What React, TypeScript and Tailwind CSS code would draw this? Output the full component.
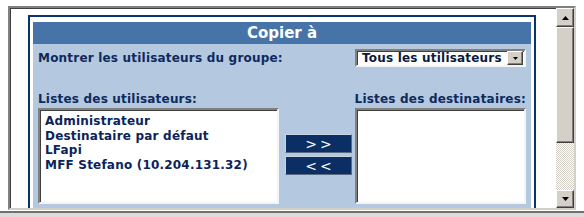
import React from 'react';

const USERS = [
  'Administrateur',
  'Destinataire par défaut',
  'LFapi',
  'MFF Stefano (10.204.131.32)',
];

function ArrowUp() {
  return (
    <svg width="7" height="4" viewBox="0 0 7 4">
      <path d="M3.5 0 L7 4 L0 4 Z" fill="#000" />
    </svg>
  );
}

function ArrowDown({ w = 7, h = 4 }: { w?: number; h?: number }) {
  return (
    <svg width={w} height={h} viewBox="0 0 7 4">
      <path d="M0 0 L7 0 L3.5 4 Z" fill="#000" />
    </svg>
  );
}

const raised =
  'border border-t-white border-l-white border-r-[#404040] border-b-[#404040] shadow-[inset_-1px_-1px_0_#808080]';
const sunken =
  'border-2 border-t-[#808080] border-l-[#808080] border-r-[#f4f4f4] border-b-[#f4f4f4] shadow-[inset_1px_1px_0_#404040]';
const moveBtn =
  'w-[67px] h-[19px] bg-[#0b2f64] text-white text-[14px] leading-none font-normal tracking-[3px] pl-[3px] border border-t-[#c8d4e4] border-l-[#c8d4e4] border-r-[#5a6a80] border-b-[#5a6a80] flex items-center justify-center';

export default function App() {
  return (
    <div className="w-[584px] h-[217px] bg-white flex flex-col overflow-hidden font-['DejaVu_Sans',sans-serif]">
      <div className="pt-[6px] pl-[8px]">
        {/* inset frame */}
        <div className="w-[568px] h-[204px] flex border-2 border-t-[#808080] border-l-[#808080] border-r-[#d4d0c8] border-b-[#d4d0c8] shadow-[inset_1px_1px_0_#404040]">
          <div className="flex-1 overflow-hidden pl-[18px] pt-[7px]">
            {/* panel */}
            <div className="w-[508px] border-2 border-[#0c3468] bg-white pt-[5px] px-[3px] pb-[3px]">
              <div className="bg-[#b4c8e0] pb-[4px]">
                <div className="h-[22px] bg-[#4674a8] flex items-center justify-center text-white text-[15px] font-bold">
                  Copier à
                </div>
                <div className="px-[5px] text-[12px] tracking-[0.2px] font-bold text-[#0e2a5c]">
                  <div className="mt-[5px] h-[18px] flex items-center justify-between">
                    <span>Montrer les utilisateurs du groupe:</span>
                    <div className={`w-[171px] h-[18px] bg-white flex items-center justify-between pl-[5px] pr-[1px] ${sunken}`}>
                      <span className="text-[#0a1a3a] leading-none">Tous les utilisateurs</span>
                      <div className={`w-[16px] h-[14px] bg-[#d4d0c8] flex items-center justify-center ${raised}`}>
                        <ArrowDown w={5} h={3} />
                      </div>
                    </div>
                  </div>
                  <div className="mt-[23px] h-[18px] flex items-start justify-between">
                    <span>Listes des utilisateurs:</span>
                    <span>Listes des destinataires:</span>
                  </div>
                  <div className="flex">
                    <div className={`w-[241px] h-[96px] bg-white pl-[5px] pt-[4px] leading-[14.5px] text-[#0b2458] ${sunken}`}>
                      {USERS.map((u) => (
                        <div key={u}>{u}</div>
                      ))}
                    </div>
                    <div className="ml-[6px] pt-[26px] flex flex-col gap-[3px]">
                      <button className={moveBtn}>&gt;&gt;</button>
                      <button className={moveBtn}>&lt;&lt;</button>
                    </div>
                    <div className={`ml-auto w-[171px] h-[96px] bg-white ${sunken}`} />
                  </div>
                </div>
              </div>
            </div>
          </div>
          {/* scrollbar */}
          <div className="w-[18px] flex flex-col">
            <div className={`h-[19px] bg-[#d4d0c8] flex items-center justify-center ${raised}`}>
              <ArrowUp />
            </div>
            <div className={`h-[116px] bg-[#d4d0c8] ${raised}`} />
            <div className="flex-1 bg-[repeating-conic-gradient(#d4d0c8_0_25%,#ffffff_0_50%)] bg-[length:2px_2px]" />
            <div className={`h-[18px] bg-[#d4d0c8] flex items-center justify-center ${raised}`}>
              <ArrowDown />
            </div>
          </div>
        </div>
      </div>
      <div className="mt-[1px] h-[2px] bg-[#707070]" />
      <div className="flex-1 bg-[#dcdcdc]" />
    </div>
  );
}
